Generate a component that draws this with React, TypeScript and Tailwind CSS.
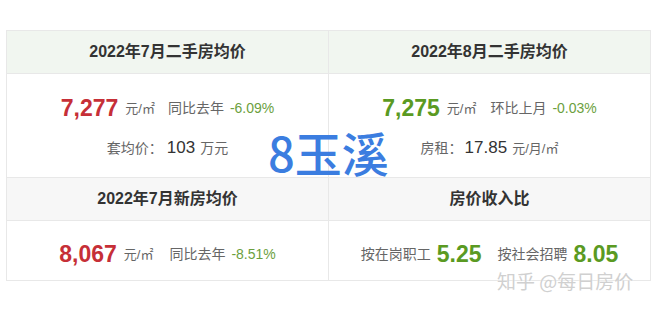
import React from 'react';

const font = { fontFamily: '"Liberation Sans", "Noto Sans CJK SC", sans-serif' };

const Unit = ({ children }: { children: React.ReactNode }) => (
  <span className="text-[13px] text-[#666]">{children}</span>
);

const App = () => {
  return (
    <div className="relative w-[657px] h-[311px] bg-white pt-[30px] pl-[6px]" style={font}>
      <div className="grid grid-cols-2 w-[645px] border-l border-t border-[#e8e8e8]">
        {/* 二手房 */}
        <div className="h-[43px] flex items-center justify-center bg-[#f1f6f0] border-r border-b border-[#e8e8e8] text-[16px] font-bold text-[#333]">
          2022年7月二手房均价
        </div>
        <div className="h-[43px] flex items-center justify-center bg-[#f1f6f0] border-r border-b border-[#e8e8e8] text-[16px] font-bold text-[#333]">
          2022年8月二手房均价
        </div>

        <div className="pt-[20px] pb-[15px] border-r border-b border-[#e8e8e8] flex flex-col items-center">
          <div className="h-[28px] flex items-center">
            <span className="text-[23px] font-bold text-[#c62f37]">7,277</span>
            <span className="ml-[7px]"><Unit>元/㎡</Unit></span>
            <span className="ml-[13px] text-[14px] text-[#666]">同比去年</span>
            <span className="ml-[6px] text-[14px] text-[#6c9f3e]">-6.09%</span>
          </div>
          <div className="mt-[12px] h-[28px] flex items-center text-[#666]">
            <span className="text-[14px]">套均价：</span>
            <span className="ml-[4px] text-[17px] text-[#333]">103</span>
            <span className="ml-[5px] text-[14px]">万元</span>
          </div>
        </div>
        <div className="pt-[20px] pb-[15px] border-r border-b border-[#e8e8e8] flex flex-col items-center">
          <div className="h-[28px] flex items-center">
            <span className="text-[23px] font-bold text-[#5a9a22]">7,275</span>
            <span className="ml-[7px]"><Unit>元/㎡</Unit></span>
            <span className="ml-[14px] text-[14px] text-[#666]">环比上月</span>
            <span className="ml-[6px] text-[14px] text-[#6c9f3e]">-0.03%</span>
          </div>
          <div className="mt-[12px] h-[28px] flex items-center text-[#666]">
            <span className="text-[14px]">房租：</span>
            <span className="ml-[2px] text-[17px] text-[#333]">17.85</span>
            <span className="ml-[5px]"><Unit>元/月/㎡</Unit></span>
          </div>
        </div>

        {/* 新房 / 收入比 */}
        <div className="h-[43px] flex items-center justify-center bg-[#f7f7f7] border-r border-b border-[#e8e8e8] text-[16px] font-bold text-[#333]">
          2022年7月新房均价
        </div>
        <div className="h-[43px] flex items-center justify-center bg-[#f7f7f7] border-r border-b border-[#e8e8e8] text-[16px] font-bold text-[#333]">
          房价收入比
        </div>

        <div className="pt-[19px] pb-[12px] border-r border-b border-[#e8e8e8] flex justify-center">
          <div className="h-[28px] flex items-center">
            <span className="text-[23px] font-bold text-[#c62f37]">8,067</span>
            <span className="ml-[7px]"><Unit>元/㎡</Unit></span>
            <span className="ml-[16px] text-[14px] text-[#666]">同比去年</span>
            <span className="ml-[6px] text-[14px] text-[#6c9f3e]">-8.51%</span>
          </div>
        </div>
        <div className="pt-[19px] pb-[12px] border-r border-b border-[#e8e8e8] flex justify-center">
          <div className="h-[28px] flex items-center">
            <span className="text-[14px] text-[#666]">按在岗职工</span>
            <span className="ml-[6px] text-[23px] font-bold text-[#5a9a22]">5.25</span>
            <span className="ml-[16px] text-[14px] text-[#666]">按社会招聘</span>
            <span className="ml-[6px] text-[23px] font-bold text-[#5a9a22]">8.05</span>
          </div>
        </div>
      </div>

      {/* watermarks */}
      <div className="absolute left-[268px] top-[128px] text-[47px] font-medium leading-none text-[#3b7de0]" style={{ fontFamily: '"Noto Sans CJK SC", sans-serif' }}>
        8玉溪
      </div>
      <div
        className="absolute left-[497px] top-[271px] text-[19px] leading-none text-[#d0d0d0]"
        style={{ fontFamily: '"Noto Sans CJK SC", sans-serif', textShadow: '0 0 2px #fff' }}
      >
        知乎 @每日房价
      </div>
    </div>
  );
};

export default App;
